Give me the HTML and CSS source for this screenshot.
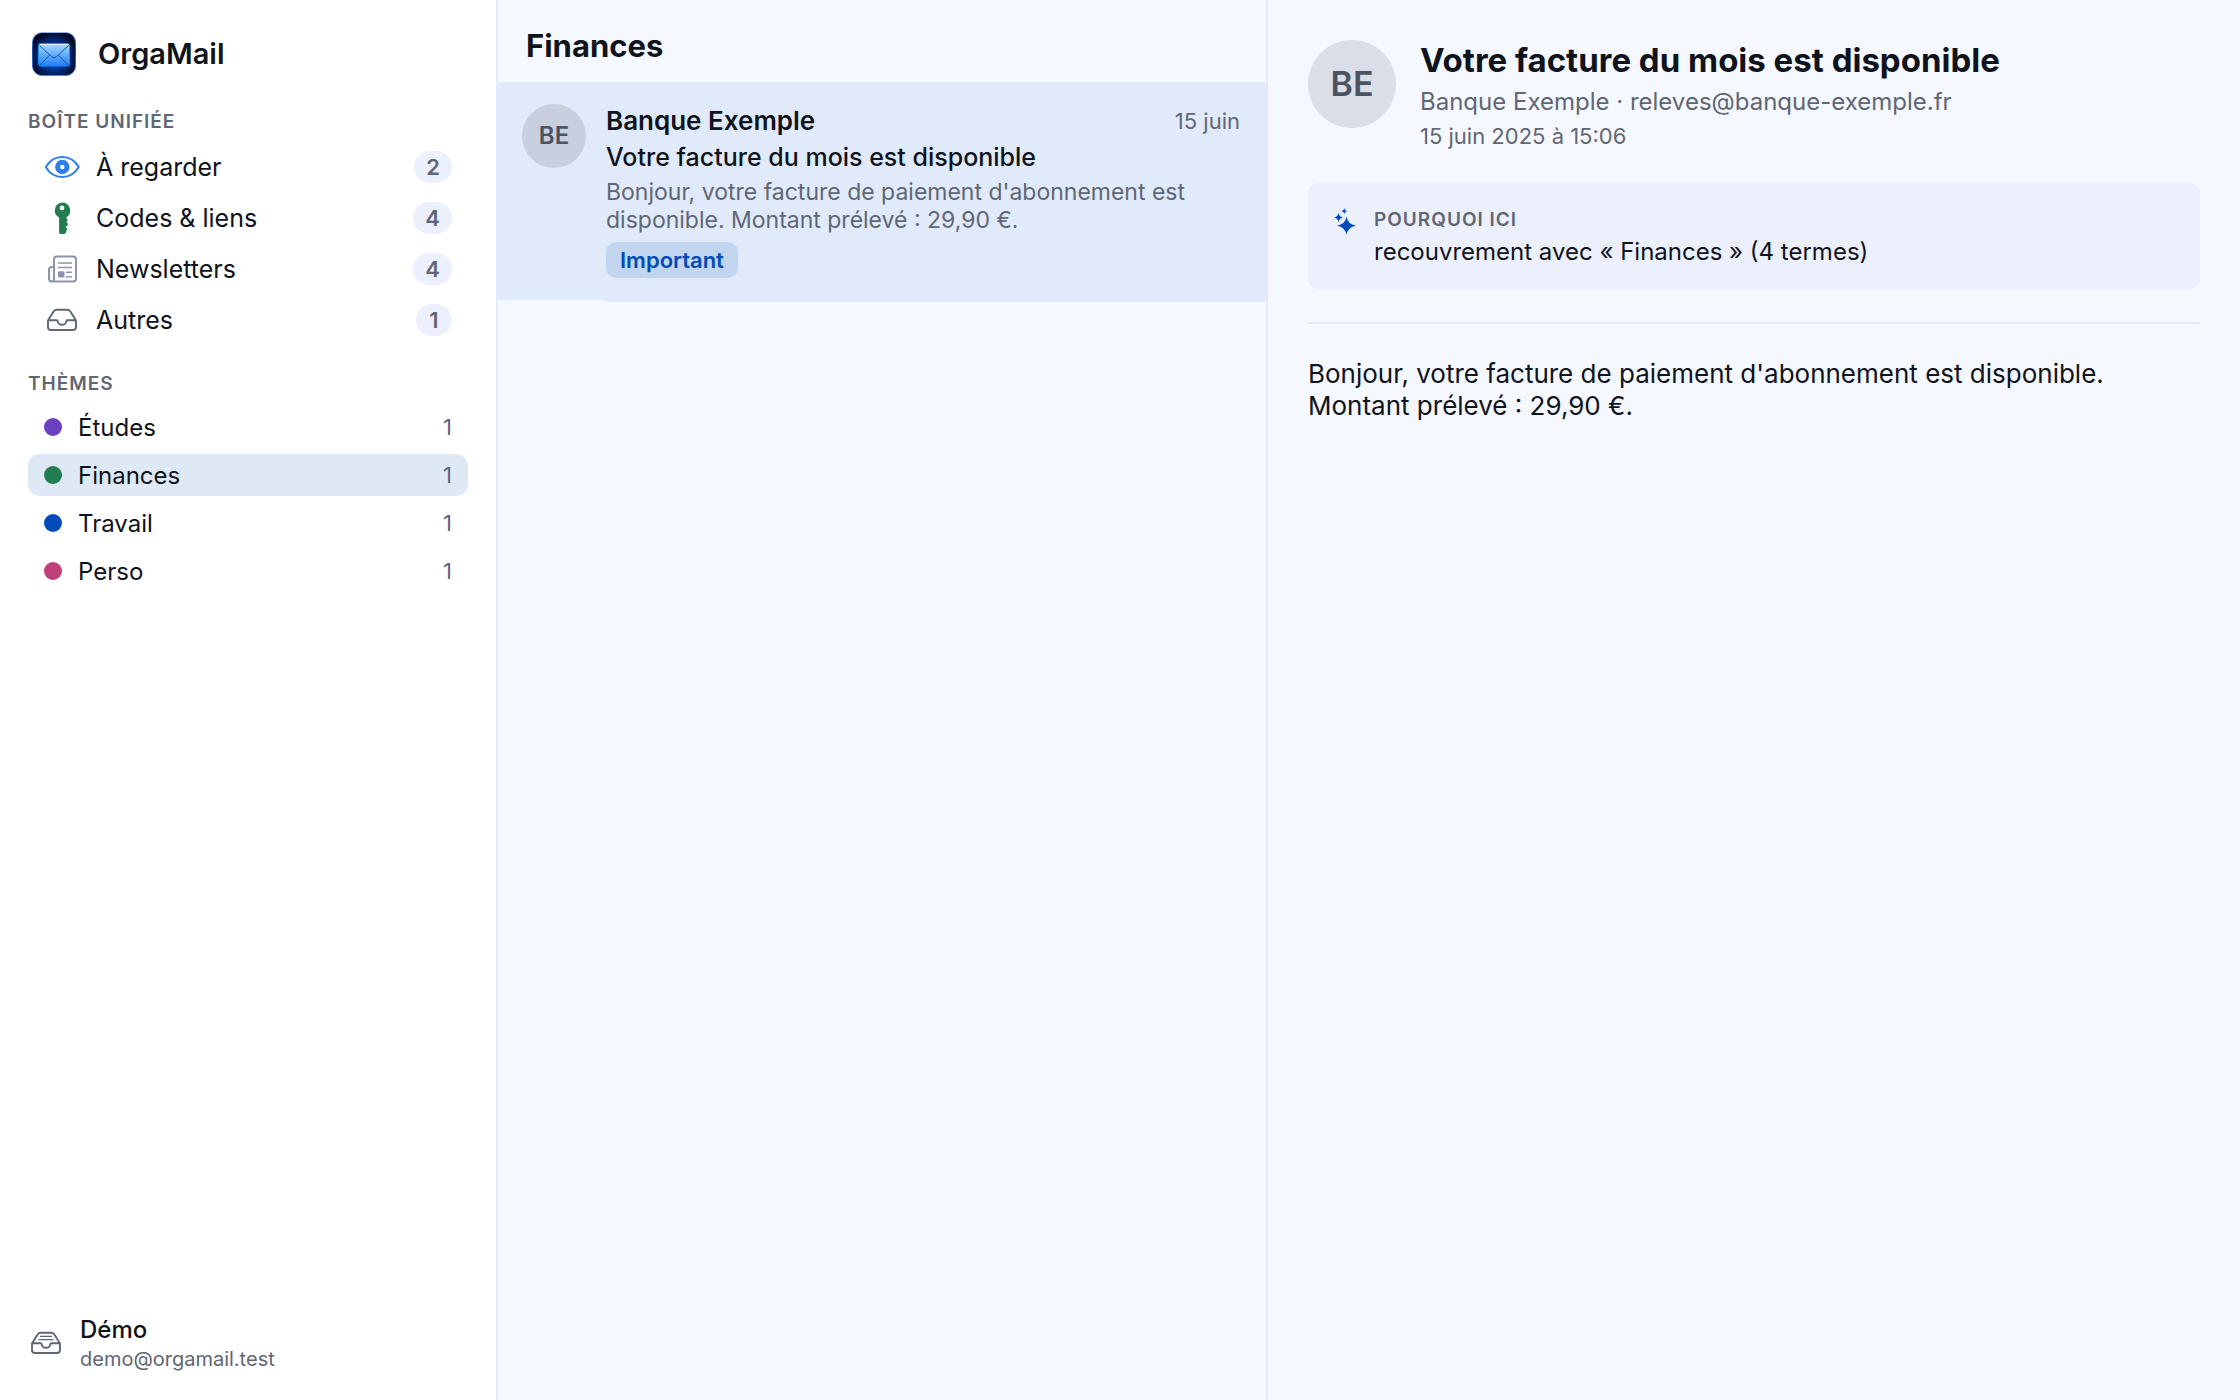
FILE: index.html
```html
<!DOCTYPE html>
<html lang="fr">
<head>
  <meta charset="UTF-8">
  <meta name="viewport" content="width=device-width, initial-scale=1">
  <title>OrgaMail</title>
  <link rel="stylesheet" href="styles.css">
</head>
<body>
  <div class="app">
    <aside class="sidebar">
      <div class="brand">
        <svg class="brand-logo" viewBox="0 0 44 44" aria-hidden="true">
          <defs>
            <radialGradient id="logoBg" cx="50%" cy="56%" r="56%">
              <stop offset="0" stop-color="#0a5fe0"/>
              <stop offset="0.55" stop-color="#04308c"/>
              <stop offset="1" stop-color="#020b2c"/>
            </radialGradient>
            <linearGradient id="logoMail" x1="0" y1="0" x2="0" y2="1">
              <stop offset="0" stop-color="#a9dcff"/>
              <stop offset="0.5" stop-color="#62aefb"/>
              <stop offset="1" stop-color="#1f7df5"/>
            </linearGradient>
            <linearGradient id="logoEdge" x1="0" y1="0" x2="0" y2="1">
              <stop offset="0" stop-color="#8fb6ea"/>
              <stop offset="0.4" stop-color="#1c4d9c"/>
              <stop offset="1" stop-color="#4b86d8"/>
            </linearGradient>
          </defs>
          <rect x="0.5" y="0.5" width="43" height="43" rx="9.5" fill="url(#logoBg)" stroke="url(#logoEdge)"/>
          <rect x="6.5" y="11.5" width="31" height="22.5" rx="2.5" fill="url(#logoMail)" stroke="#1590ff"/>
          <path d="M7.5 12.5h29" stroke="#d4efff"/>
          <path d="M7.5 13.5l12 11.2q2.5 2.2 5 0l12-11.2M8 33l9.5-9.8M36 33l-9.5-9.8" fill="none" stroke="#1350ad"/>
        </svg>
        <h1 class="brand-name">OrgaMail</h1>
      </div>

      <nav class="nav" aria-label="Navigation">
        <h2 class="section-label">BOÎTE UNIFIÉE</h2>
        <a class="nav-item" href="#regarder">
          <svg class="nav-icon eye" viewBox="0 0 36 32" aria-hidden="true">
            <path d="M1.8 16C5.500 9.500 11.500 6 18.300 6s12.700 3.500 16.400 10c-3.700 6.500-9.600 10-16.400 10S5.500 22.500 1.800 16z" fill="none" stroke="currentColor" stroke-width="2"/>
            <circle cx="18.3" cy="16" r="4.7" fill="none" stroke="currentColor" stroke-width="5"/>
          </svg>
          <span class="nav-text">À regarder</span>
          <span class="badge">2</span>
        </a>
        <a class="nav-item" href="#codes">
          <svg class="nav-icon key" viewBox="0 0 36 32" aria-hidden="true">
            <path fill="currentColor" fill-rule="evenodd" d="M18 .5a8 8 0 0 1 4.500 14.700v1.300l1 1.200v1.200l-1.200 1.200 1.700 1.700v1l-2.300 2.300 1.600 1.700v.8l-1.300 1.400.6.9-3 3q-1.300 1-2.500 0l-2-2V15.500A8 8 0 0 1 18 .5zM18 3.500a2.400 2.400 0 1 0 0 4.800 2.400 2.400 0 0 0 0-4.800z"/>
          </svg>
          <span class="nav-text">Codes &amp; liens</span>
          <span class="badge">4</span>
        </a>
        <a class="nav-item" href="#newsletters">
          <svg class="nav-icon news" viewBox="0 0 36 32" aria-hidden="true">
            <g fill="none" stroke="currentColor" stroke-width="2">
              <path d="M10 26.500V6.500q0-3 3-3h16q3 0 3 3v19q0 3-3 3H8q-3 0-3-3V17q0-3 3-3h2v12q0 2.500-2.200 2.500"/>
              <path d="M14 10h14M14 14.500h14M22 19.200h6M22 23.800h6" stroke-width="1.6"/>
            </g>
            <rect x="14" y="18.3" width="6.5" height="6.3" rx="1.3" fill="currentColor"/>
          </svg>
          <span class="nav-text">Newsletters</span>
          <span class="badge">4</span>
        </a>
        <a class="nav-item" href="#autres">
          <svg class="nav-icon tray" viewBox="0 0 36 32" aria-hidden="true">
            <path fill="none" stroke="currentColor" stroke-width="1.9" stroke-linejoin="round" d="M4 16.500l5.600-9q1.200-1.700 3-1.700h10.800q1.800 0 3 1.700l5.600 9V23q0 3-3 3H7q-3 0-3-3zM4 16.200h8.500q1.200 0 1.300 1.300c.2 2 1.800 3.300 4.200 3.300s4-1.300 4.200-3.300q.1-1.300 1.300-1.300H32"/>
          </svg>
          <span class="nav-text">Autres</span>
          <span class="badge">1</span>
        </a>

        <h2 class="section-label themes-label">THÈMES</h2>
        <div class="themes">
          <a class="theme" href="#etudes"><span class="dot violet"></span><span class="theme-name">Études</span><span class="count">1</span></a>
          <a class="theme active" href="#finances" aria-current="page"><span class="dot green"></span><span class="theme-name">Finances</span><span class="count">1</span></a>
          <a class="theme" href="#travail"><span class="dot blue"></span><span class="theme-name">Travail</span><span class="count">1</span></a>
          <a class="theme" href="#perso"><span class="dot pink"></span><span class="theme-name">Perso</span><span class="count">1</span></a>
        </div>
      </nav>

      <div class="account">
        <svg class="nav-icon tray" viewBox="0 0 36 32" aria-hidden="true">
          <path fill="none" stroke="currentColor" stroke-width="1.9" stroke-linejoin="round" d="M4 16.500l5.600-9q1.200-1.700 3-1.700h10.800q1.800 0 3 1.700l5.600 9V23q0 3-3 3H7q-3 0-3-3zM4 16.200h8.500q1.200 0 1.300 1.300c.2 2 1.800 3.300 4.200 3.300s4-1.300 4.200-3.300q.1-1.300 1.300-1.300H32"/>
          <path d="M12 9.300h12M10.500 12.700h15" stroke="currentColor" stroke-width="1.3"/>
        </svg>
        <div>
          <div class="account-name">Démo</div>
          <div class="account-mail">demo@orgamail.test</div>
        </div>
      </div>
    </aside>

    <section class="list">
      <h2 class="list-title">Finances</h2>
      <a class="message" href="#message">
        <span class="avatar">BE</span>
        <span class="message-body">
          <span class="message-top">
            <span class="sender">Banque Exemple</span>
            <time class="date" datetime="2025-06-15">15 juin</time>
          </span>
          <span class="subject">Votre facture du mois est disponible</span>
          <span class="preview">Bonjour, votre facture de paiement d'abonnement est disponible. Montant prélevé : 29,90 €.</span>
          <span class="chip">Important</span>
        </span>
      </a>
      <div class="separator"></div>
    </section>

    <main class="detail">
      <header class="detail-head">
        <span class="avatar avatar-large">BE</span>
        <div>
          <h2 class="detail-title">Votre facture du mois est disponible</h2>
          <p class="detail-from">Banque Exemple · releves@banque-exemple.fr</p>
          <p class="detail-date">15 juin 2025 à 15:06</p>
        </div>
      </header>

      <div class="why">
        <svg class="why-icon" viewBox="0 0 26 30" aria-hidden="true">
          <path fill="currentColor" d="M14.500 10.500q1.200 7.800 9.500 9.200-8.300 1.400-9.500 9.300-1.200-7.900-9.500-9.300 8.300-1.400 9.500-9.200zM6.500 7q.7 3.800 4.500 4.500-3.800.7-4.500 4.500-.7-3.800-4.500-4.500Q5.800 10.800 6.500 7zM12.300 2.200q.4 2.500 2.900 2.900-2.500.4-2.900 2.900-.4-2.500-2.900-2.900 2.500-.4 2.900-2.900z"/>
        </svg>
        <div>
          <h3 class="why-label">POURQUOI ICI</h3>
          <p class="why-text">recouvrement avec « Finances » (4 termes)</p>
        </div>
      </div>

      <hr class="rule">
      <p class="mail-text">Bonjour, votre facture de paiement d'abonnement est disponible.<br>Montant prélevé : 29,90 €.</p>
    </main>
  </div>
</body>
</html>
```

FILE: styles.css
```css
* {
  box-sizing: border-box;
  margin: 0;
  padding: 0;
}
body {
  font-family: Inter, "Liberation Sans", sans-serif;
  font-size: 24px;
  color: #0f131c;
  background: #f5f8ff;
}
a {
  color: inherit;
  text-decoration: none;
}
.app {
  display: grid;
  grid-template-columns: 498px 770px 1fr;
  min-height: 100vh;
}

/* Sidebar */
.sidebar {
  display: flex;
  flex-direction: column;
  padding: 32px 28px 28px;
  background: #fff;
  border-right: 2px solid #e4eafb;
}
.brand {
  display: flex;
  align-items: center;
  gap: 22px;
  padding-left: 4px;
  margin-bottom: 32px;
}
.brand-logo {
  width: 44px;
  height: 44px;
}
.brand-name {
  font-size: 29px;
  line-height: 44px;
  font-weight: 600;
}
.nav {
  flex: 1;
}
.section-label,
.why-label {
  font-size: 19px;
  line-height: 28px;
  font-weight: 600;
  letter-spacing: 1px;
  color: #5f6675;
}
.section-label {
  margin-bottom: 5px;
}
.themes-label {
  margin-top: 25px;
  margin-bottom: 8px;
}
.nav-item {
  display: flex;
  align-items: center;
  gap: 16px;
  height: 51px;
  padding: 0 16px;
}
.nav-icon {
  flex: none;
  width: 36px;
  height: 32px;
}
.eye {
  color: #2f7de9;
}
.key {
  color: #217c4f;
}
.news {
  color: #8b95ab;
}
.tray {
  color: #5f6675;
}
.nav-text,
.theme-name {
  flex: 1;
}
.nav-text {
  font-size: 25px;
}
.badge {
  min-width: 36px;
  padding: 0 12px;
  border-radius: 16px;
  background: #ecf0fc;
  color: #5f6675;
  font-size: 22px;
  line-height: 32px;
  font-weight: 600;
  text-align: center;
}
.themes {
  display: flex;
  flex-direction: column;
  gap: 6px;
}
.theme {
  display: flex;
  align-items: center;
  height: 42px;
  padding: 0 16px;
  border-radius: 12px;
}
.theme.active {
  background: #dfe9f6;
}
.dot {
  width: 18px;
  height: 18px;
  margin-right: 16px;
  border-radius: 50%;
}
.violet {
  background: #6b40c1;
}
.green {
  background: #217c4f;
}
.blue {
  background: #004bb8;
}
.pink {
  background: #c13f78;
}
.count {
  color: #5f6675;
  font-size: 22px;
}
.account {
  display: flex;
  align-items: center;
  gap: 16px;
}
.account-name {
  line-height: 32px;
  font-weight: 500;
}
.account-mail {
  font-size: 20px;
  line-height: 26px;
  color: #5f6675;
}

/* Message list */
.list {
  border-right: 2px solid #e4eafb;
}
.list-title {
  padding: 26px 28px 16px;
  font-size: 31px;
  line-height: 40px;
  font-weight: 700;
}
.message {
  display: flex;
  gap: 20px;
  padding: 22px 26px 22px 24px;
  background: #e1eafa;
}
.avatar {
  flex: none;
  width: 64px;
  height: 64px;
  border-radius: 50%;
  background: #c8d0df;
  color: #4c5463;
  font-size: 24px;
  line-height: 64px;
  font-weight: 600;
  text-align: center;
}
.message-body {
  flex: 1;
  display: flex;
  flex-direction: column;
  align-items: flex-start;
}
.message-top {
  display: flex;
  justify-content: space-between;
  width: 100%;
  line-height: 34px;
}
.sender {
  font-size: 26px;
  font-weight: 600;
}
.date {
  font-size: 22px;
  color: #5f6675;
}
.subject {
  margin-top: 2px;
  font-size: 25px;
  line-height: 34px;
  font-weight: 500;
}
.preview {
  margin-top: 4px;
  font-size: 23px;
  line-height: 28px;
  color: #5f6675;
}
.chip {
  margin-top: 8px;
  padding: 0 14px;
  border-radius: 10px;
  background: #c1d5ef;
  color: #004bb8;
  font-size: 22px;
  line-height: 36px;
  font-weight: 600;
}
.separator {
  height: 2px;
  margin-left: 108px;
  background: #e1eafa;
}

/* Open message */
.detail {
  padding: 40px;
}
.detail-head {
  display: flex;
  gap: 24px;
}
.avatar-large {
  width: 88px;
  height: 88px;
  background: #dadee6;
  font-size: 34px;
  line-height: 88px;
}
.detail-title {
  font-size: 33px;
  line-height: 40px;
  font-weight: 700;
}
.detail-from {
  margin-top: 6px;
  line-height: 32px;
  color: #5f6675;
}
.detail-date {
  margin-top: 4px;
  font-size: 22px;
  line-height: 28px;
  color: #5f6675;
}
.why {
  display: flex;
  gap: 16px;
  margin-top: 32px;
  padding: 24px;
  border-radius: 12px;
  background: #ecf0fc;
}
.why-icon {
  width: 26px;
  height: 30px;
  color: #004bb8;
}
.why-text {
  margin-top: 4px;
  line-height: 28px;
}
.rule {
  height: 2px;
  margin: 32px 0 34px;
  border: none;
  background: #e4eafb;
}
.mail-text {
  font-size: 26px;
  line-height: 32px;
}
```
